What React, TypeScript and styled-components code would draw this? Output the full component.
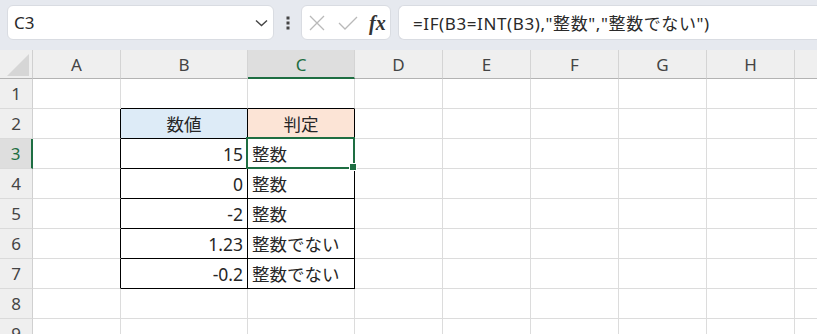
import React from 'react';
import styled, { createGlobalStyle } from 'styled-components';

const GlobalStyle = createGlobalStyle`
  html, body {
    margin: 0;
    padding: 0;
    background: #ffffff;
    overflow: hidden;
  }
  body {
    font-family: 'Noto Sans', 'Noto Sans CJK JP', sans-serif;
    color: #262626;
  }
`;

const Page = styled.div`
  width: 817px;
  height: 334px;
  overflow: hidden;
`;

const Toolbar = styled.div`
  height: 50px;
  box-sizing: border-box;
  background: #e6e9ef;
  display: flex;
  align-items: flex-start;
  padding: 5px 0 0 7px;
`;

const NameBox = styled.div`
  width: 267px;
  height: 35px;
  box-sizing: border-box;
  background: #fff;
  border: 1px solid #d9dce2;
  border-radius: 6px;
  display: flex;
  align-items: center;
  justify-content: space-between;
  padding: 0 5px 0 6px;
  font-size: 17px;
  color: #2a2a2a;
`;

const DotsHandle = styled.div`
  width: 27px;
  height: 35px;
  display: flex;
  align-items: center;
  justify-content: center;
`;

const FxBox = styled.div`
  width: 90px;
  height: 35px;
  box-sizing: border-box;
  background: #fff;
  border: 1px solid #d9dce2;
  border-radius: 6px;
  display: flex;
  align-items: center;
  padding: 0 0 0 7px;
  gap: 13px;
`;

const FxLabel = styled.span`
  font-family: 'Liberation Serif', serif;
  font-style: italic;
  font-weight: bold;
  font-size: 20px;
  color: #333;
  line-height: 1;
  margin-left: -2px;
`;

const FormulaBox = styled.div`
  flex: 1;
  margin-left: 7px;
  height: 35px;
  box-sizing: border-box;
  background: #fff;
  border: 1px solid #d9dce2;
  border-right: none;
  border-radius: 6px 0 0 6px;
  display: flex;
  align-items: center;
  padding-left: 14px;
  font-size: 17px;
  letter-spacing: 0.6px;
  color: #2a2a2a;
  white-space: nowrap;
`;

const Sheet = styled.div`
  display: grid;
  grid-template-columns: 33px 88px 127px 107px 88px 88px 88px 88px 88px 88px;
  grid-template-rows: 29px;
  grid-auto-rows: 30px;
`;

const Corner = styled.div`
  position: relative;
  background: #efefef;
  border-right: 1px solid #d0d0d0;
  border-bottom: 1px solid #b3b3b3;
  box-sizing: border-box;
  svg {
    position: absolute;
    right: 3px;
    bottom: 2px;
  }
`;

const ColHeader = styled.div<{ $active?: boolean }>`
  box-sizing: border-box;
  background: ${(p) => (p.$active ? '#dedede' : '#efefef')};
  border-right: 1px solid #d4d4d4;
  border-bottom: ${(p) => (p.$active ? '2px solid #1e6e42' : '1px solid #b3b3b3')};
  display: flex;
  align-items: center;
  justify-content: center;
  font-size: 17px;
  color: ${(p) => (p.$active ? '#1e6e42' : '#444')};
  padding-top: ${(p) => (p.$active ? '1px' : '0')};
`;

const RowHeader = styled.div<{ $active?: boolean }>`
  box-sizing: border-box;
  background: ${(p) => (p.$active ? '#dedede' : '#efefef')};
  border-right: ${(p) => (p.$active ? '2px solid #1e6e42' : '1px solid #d0d0d0')};
  border-bottom: 1px solid #dadada;
  display: flex;
  align-items: center;
  justify-content: center;
  font-size: 17px;
  color: ${(p) => (p.$active ? '#1e6e42' : '#444')};
`;

const Cell = styled.div<{ $align?: 'left' | 'right' | 'center'; $bg?: string; $rb?: boolean; $bb?: boolean }>`
  position: relative;
  box-sizing: border-box;
  background: ${(p) => p.$bg || '#fff'};
  border-right: 1px solid ${(p) => (p.$rb ? '#000' : '#dcdcdc')};
  border-bottom: 1px solid ${(p) => (p.$bb ? '#000' : '#dcdcdc')};
  display: flex;
  align-items: center;
  justify-content: ${(p) => (p.$align === 'right' ? 'flex-end' : p.$align === 'center' ? 'center' : 'flex-start')};
  padding: 0 4px;
  font-size: 17.5px;
  color: #262626;
  white-space: nowrap;
`;

const Selection = styled.div`
  position: absolute;
  top: -2px;
  left: -2px;
  right: -1px;
  bottom: -1px;
  border: 2px solid #1e6e42;
  z-index: 2;
  pointer-events: none;
`;

const FillHandle = styled.div`
  position: absolute;
  right: -4px;
  bottom: -4px;
  width: 6px;
  height: 6px;
  background: #1e6e42;
  border: 1px solid #fff;
`;

// column I is only partly on screen, its letter falls outside the window
const columns = ['A', 'B', 'C', 'D', 'E', 'F', 'G', 'H', ''];

const data: Record<number, [string, string]> = {
  3: ['15', '整数'],
  4: ['0', '整数'],
  5: ['-2', '整数'],
  6: ['1.23', '整数でない'],
  7: ['-0.2', '整数でない'],
};

const Chevron = () => (
  <svg width="13" height="8" viewBox="0 0 13 8">
    <path d="M1 1.5 L6.5 6.5 L12 1.5" fill="none" stroke="#444" strokeWidth="1.4" />
  </svg>
);

const Dots = () => (
  <svg width="4" height="14" viewBox="0 0 4 14">
    <rect x="0.5" y="0.5" width="3" height="3" fill="#444" />
    <rect x="0.5" y="5.5" width="3" height="3" fill="#444" />
    <rect x="0.5" y="10.5" width="3" height="3" fill="#444" />
  </svg>
);

const CancelIcon = () => (
  <svg width="16" height="16" viewBox="0 0 16 16">
    <path d="M1 1 L15 15 M15 1 L1 15" stroke="#b9b9b9" strokeWidth="1.3" fill="none" />
  </svg>
);

const CheckIcon = () => (
  <svg width="20" height="14" viewBox="0 0 20 14">
    <path d="M1 7 L7 13 L19 1" stroke="#b9b9b9" strokeWidth="1.3" fill="none" />
  </svg>
);

const renderCell = (row: number, colIdx: number) => {
  const col = columns[colIdx];
  const key = `${row}-${colIdx}`;
  const inTableRow = row >= 2 && row <= 7;
  // black borders around/inside the B2:C7 table
  const rb = inTableRow && (col === 'A' || col === 'B' || col === 'C');
  const bb = (row === 1 || inTableRow) && (col === 'B' || col === 'C');

  if (row === 2 && col === 'B')
    return (
      <Cell key={key} $align="center" $bg="#ddebf7" $rb={rb} $bb={bb}>
        数値
      </Cell>
    );
  if (row === 2 && col === 'C')
    return (
      <Cell key={key} $align="center" $bg="#fce4d6" $rb={rb} $bb={bb}>
        判定
      </Cell>
    );
  if (data[row] && col === 'B')
    return (
      <Cell key={key} $align="right" $rb={rb} $bb={bb}>
        {data[row][0]}
      </Cell>
    );
  if (data[row] && col === 'C')
    return (
      <Cell key={key} $rb={rb} $bb={bb}>
        {data[row][1]}
        {row === 3 && (
          <Selection>
            <FillHandle />
          </Selection>
        )}
      </Cell>
    );
  return <Cell key={key} $rb={rb} $bb={bb} />;
};

const App = () => {
  const rows = [1, 2, 3, 4, 5, 6, 7, 8, 9];
  return (
    <Page>
      <GlobalStyle />
      <Toolbar>
        <NameBox>
          <span>C3</span>
          <Chevron />
        </NameBox>
        <DotsHandle>
          <Dots />
        </DotsHandle>
        <FxBox>
          <CancelIcon />
          <CheckIcon />
          <FxLabel>fx</FxLabel>
        </FxBox>
        <FormulaBox>=IF(B3=INT(B3),"整数","整数でない")</FormulaBox>
      </Toolbar>
      <Sheet>
        <Corner>
          <svg width="22" height="22" viewBox="0 0 22 22">
            <path d="M22 0 L22 22 L0 22 Z" fill="#d6d6d6" />
          </svg>
        </Corner>
        {columns.map((c, i) => (
          <ColHeader key={i} $active={c === 'C'}>
            {c}
          </ColHeader>
        ))}
        {rows.map((r) => (
          <React.Fragment key={r}>
            <RowHeader $active={r === 3}>{r}</RowHeader>
            {columns.map((_, i) => renderCell(r, i))}
          </React.Fragment>
        ))}
      </Sheet>
    </Page>
  );
};

export default App;
